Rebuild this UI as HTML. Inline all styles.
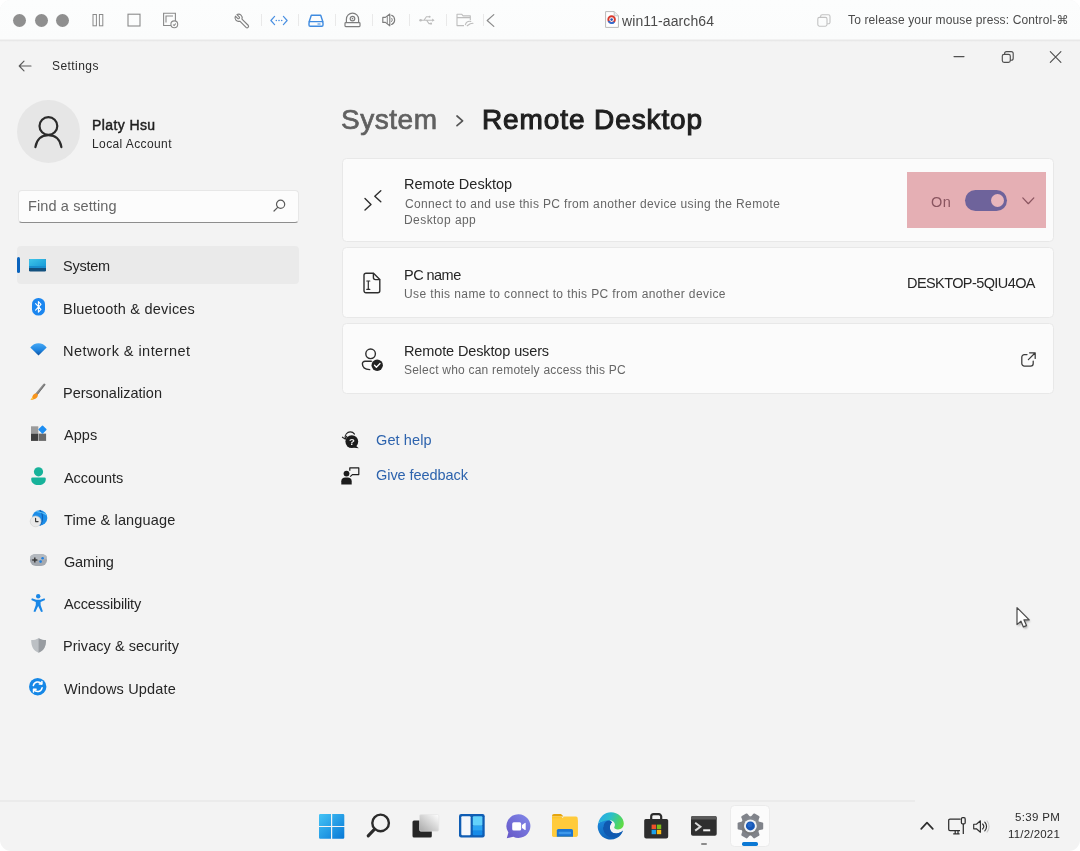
<!DOCTYPE html>
<html lang="en">
<head>
<meta charset="utf-8">
<title>win11-aarch64 - Settings - Remote Desktop</title>
<style>
*{box-sizing:border-box;margin:0;padding:0}
html,body{width:1080px;height:851px;overflow:hidden;background:#fff}
body{font-family:"Liberation Sans","DejaVu Sans",sans-serif;color:#1b1b1b;position:relative}
#win{position:absolute;left:0;top:0;width:1080px;height:851px;background:#f3f3f3;border-radius:11px;overflow:hidden;will-change:transform;filter:blur(.5px)}
.abs{position:absolute}
svg.abs{overflow:visible}
.t{position:absolute;white-space:nowrap;line-height:1}
#macbar{position:absolute;left:0;top:0;width:1080px;height:42px;background:linear-gradient(#fcfdfd 0,#fbfcfc 38.500px,#f1f1f1 39.600px,#e7e7e7 40.600px,#efefef 41.400px,#f3f3f3 42px)}
.dot{position:absolute;top:13.5px;width:13px;height:13px;border-radius:50%;background:#8f8f8f}
.sep{position:absolute;top:14px;width:1px;height:12px;background:#e9e9e9}
#avatar{position:absolute;left:17px;top:100px;width:63px;height:63px;border-radius:50%;background:#e6e6e6}
#search{position:absolute;left:17.500px;top:189.500px;width:281.500px;height:33px;background:#fcfcfc;border:1px solid #e7e7e7;border-bottom:1.5px solid #8d8d8d;border-radius:4px}
#navsel{position:absolute;left:17px;top:246px;width:282px;height:37.500px;background:#eaeaea;border-radius:4px}
#navbar{position:absolute;left:17.3px;top:257px;width:3px;height:15.5px;background:#0a63bd;border-radius:1.5px}
.card{position:absolute;left:342px;width:712px;background:#fbfbfb;border:1px solid #e8e8e8;border-radius:4.5px}
#taskline{position:absolute;left:0;top:800px;width:914.500px;height:2px;background:#ebebeb}
</style>
</head>
<body>
<div id="win">
<!-- ===== macOS VM window toolbar ===== -->
<div id="macbar">
  <div class="dot" style="left:13.2px"></div>
  <div class="dot" style="left:34.5px"></div>
  <div class="dot" style="left:55.7px"></div>
  <!-- pause -->
  <svg class="abs" style="left:92px;top:13px" width="12" height="14" viewBox="0 0 12 14"><g fill="none" stroke="#8a8a8a" stroke-width="1"><rect x="1" y="1.5" width="3.4" height="11.3"/><rect x="7.4" y="1.5" width="3.4" height="11.3"/></g></svg>
  <!-- stop -->
  <svg class="abs" style="left:127px;top:13px" width="14" height="14" viewBox="0 0 14 14"><rect x="1" y="1.2" width="12" height="11.8" fill="none" stroke="#8a8a8a" stroke-width="1.1"/></svg>
  <!-- snapshot -->
  <svg class="abs" style="left:162px;top:12px" width="17" height="17" viewBox="0 0 17 17"><g fill="none" stroke="#8a8a8a" stroke-width="1.1"><path d="M9 13.5H1.6V1.2H13.4V9"/><path d="M4 10.5V4H11"/><circle cx="12.3" cy="12.3" r="3.4"/><path d="M11 12.6l1.2.9 1.6-2"/></g></svg>
  <!-- wrench -->
  <svg class="abs" style="left:233.800px;top:12.600px" width="16" height="15" viewBox="0 0 16 15" preserveAspectRatio="none"><path d="M2.950 1.600A3.600 3.600 0 0 1 7.970 6.050L14.140 12.220A1.500 1.500 0 0 1 12.020 14.340L5.850 8.170A3.600 3.600 0 0 1 1.400 3.150L3.610 5.370A1.100 1.100 0 0 0 5.170 3.810Z" fill="none" stroke="#808080" stroke-width="1.150" stroke-linejoin="round"/></svg>
  <div class="sep" style="left:261px"></div>
  <!-- <..> -->
  <svg class="abs" style="left:270px;top:15px" width="18" height="11" viewBox="0 0 18 11"><g fill="none" stroke="#4a90e2" stroke-width="1.2" stroke-linecap="round" stroke-linejoin="round"><path d="M4.6 1.4L.9 5.5l3.7 4.1M13.4 1.4l3.7 4.1-3.7 4.1"/></g><g fill="#4a90e2"><circle cx="6.3" cy="5.5" r=".8"/><circle cx="9" cy="5.5" r=".8"/><circle cx="11.7" cy="5.5" r=".8"/></g></svg>
  <div class="sep" style="left:298px"></div>
  <!-- drive -->
  <svg class="abs" style="left:307.5px;top:13.5px" width="16" height="13" viewBox="0 0 16 13"><g fill="none" stroke="#3f8be0" stroke-width="1.4" stroke-linejoin="round"><path d="M1 8.2L3.3 1.2h9.4L15 8.2"/><rect x="1" y="7.6" width="14" height="4.6" rx="1.2"/></g><path d="M9.5 10h3" stroke="#3f8be0" stroke-width="1"/></svg>
  <div class="sep" style="left:335px"></div>
  <!-- camera/cd -->
  <svg class="abs" style="left:344px;top:12px" width="17" height="16" viewBox="0 0 17 16"><g fill="none" stroke="#7d7d7d" stroke-width="1.2"><path d="M2.4 10.6V7.2a6.1 6.1 0 0 1 12.2 0v3.4"/><rect x="1" y="10.6" width="15" height="4" rx=".8"/><circle cx="8.5" cy="6.6" r="2.3"/></g><circle cx="8.5" cy="6.6" r=".8" fill="#7d7d7d"/></svg>
  <div class="sep" style="left:371.7px"></div>
  <!-- speaker -->
  <svg class="abs" style="left:381.500px;top:13px" width="15" height="14" viewBox="0 0 15 14"><g fill="none" stroke="#7d7d7d" stroke-width="1.150" stroke-linejoin="round"><path d="M.800 4.400h2.600L7.800 1v11.800L3.400 9.400H.8z"/><path d="M5.300 3.200v7.400" stroke-width=".9"/><path d="M9.600 2.300a5 5 0 0 1 0 9.200" stroke-linecap="round"/><path d="M9.600 5.200a2.200 2.200 0 0 1 0 3.400" stroke-linecap="round" stroke-width="1"/></g></svg>
  <div class="sep" style="left:408.7px"></div>
  <!-- usb -->
  <svg class="abs" style="left:418.5px;top:15px" width="16" height="10" viewBox="0 0 16 10"><g fill="none" stroke="#bdbdbd" stroke-width="1.1" stroke-linecap="round"><path d="M2 5.2h12M5 5.2l2.4-3.4H10M7.6 5.2L10 8.6h1.6"/></g><circle cx="1.6" cy="5.2" r="1.3" fill="#bdbdbd"/><path d="M13.2 3.6l2.4 1.6-2.4 1.6z" fill="#bdbdbd"/><circle cx="10.6" cy="1.8" r="1" fill="#bdbdbd"/><rect x="11.2" y="7.7" width="1.8" height="1.8" fill="#bdbdbd"/></svg>
  <div class="sep" style="left:445.7px"></div>
  <!-- shared folder -->
  <svg class="abs" style="left:455.5px;top:13px" width="18" height="14" viewBox="0 0 18 14"><g fill="none" stroke="#bdbdbd" stroke-width="1.1" stroke-linejoin="round"><path d="M8 12.6H1V1.2h4.6l1.5 1.7h7.2v4.2M1 4.6h13.3"/><path d="M9.4 11.6c.8-2.6 3-3.6 5.4-3.2M11.2 12.8l3-2.1 2.8-.4" stroke-linecap="round"/></g></svg>
  <div class="sep" style="left:482.5px"></div>
  <!-- < -->
  <svg class="abs" style="left:485.5px;top:13.5px" width="9" height="13" viewBox="0 0 9 13"><path d="M7.8.6L1.2 6.5l6.6 5.9" fill="none" stroke="#8a8a8a" stroke-width="1.2" stroke-linecap="round" stroke-linejoin="round"/></svg>
  <!-- doc icon -->
  <svg class="abs" style="left:604.5px;top:11px" width="14" height="17" viewBox="0 0 14 17"><path d="M.6.6h8.6l4.2 4.2v11.6H.6z" fill="#fff" stroke="#b9b9b9" stroke-width="1"/><path d="M9.2.6v4.2h4.2" fill="#ececec" stroke="#b9b9b9" stroke-width=".8"/><circle cx="6.6" cy="8.6" r="3.3" fill="#fff" stroke="#d8382c" stroke-width="1.9"/><path d="M3.6 10a3.3 3.3 0 0 0 5.6.9" fill="none" stroke="#2c6fd6" stroke-width="1.9"/><circle cx="6.6" cy="8.6" r="1.3" fill="#2c56b0"/></svg>
  <!-- copy -->
  <svg class="abs" style="left:816.5px;top:13.5px" width="14" height="13" viewBox="0 0 14 13"><g fill="none" stroke="#c2c2c2" stroke-width="1.1"><rect x=".8" y="3.4" width="9.2" height="8.8" rx="1.6"/><path d="M3.6 3.2V2.4A1.6 1.6 0 0 1 5.2.8h6.2A1.6 1.6 0 0 1 13 2.4v5.8a1.6 1.6 0 0 1-1.6 1.6h-1.2"/></g></svg>
</div>
<!-- ===== Settings window chrome ===== -->
<svg class="abs" style="left:18px;top:60px" width="14" height="12" viewBox="0 0 14 12"><path d="M13 6H1.4M6 1.2L1.2 6 6 10.8" fill="none" stroke="#5a5a5a" stroke-width="1.15" stroke-linecap="round" stroke-linejoin="round"/></svg>
<svg class="abs" style="left:953px;top:50px" width="110" height="14" viewBox="0 0 110 14"><g fill="none" stroke="#505050" stroke-width="1.15" stroke-linecap="round" stroke-linejoin="round"><path d="M1 6.6h10"/><rect x="49.3" y="4.3" width="8" height="8" rx="1.8"/><path d="M51.6 4.2V3.6a2 2 0 0 1 2-2h4.6a2 2 0 0 1 2 2v4.6a2 2 0 0 1-2 2h-.8"/><path d="M97.3 1.6l10.6 10.8M107.9 1.6L97.3 12.4"/></g></svg>

<!-- ===== Sidebar ===== -->
<div id="avatar"></div>
<svg class="abs" style="left:33px;top:114px" width="31" height="35" viewBox="0 0 31 35"><g fill="none" stroke="#2b2b2b" stroke-width="2.2" stroke-linecap="round"><circle cx="15.400" cy="12" r="8.900"/><path d="M2.4 33.2c1.2-8 6.4-12 13-12s11.800 4 13 12"/></g></svg>
<div id="search"></div>
<svg class="abs" style="left:273px;top:199px" width="13" height="13" viewBox="0 0 13 13"><g fill="none" stroke="#5a5a5a" stroke-width="1.2" stroke-linecap="round"><circle cx="7.6" cy="5.2" r="4.1"/><path d="M4.7 8.3L1 12"/></g></svg>
<div id="navsel"></div><div id="navbar"></div>

<!-- nav icons -->
<svg class="abs" style="left:29.3px;top:258.5px" width="17" height="13" viewBox="0 0 17 13"><defs><linearGradient id="gsys" x1="0" y1="0" x2="1" y2="1"><stop offset="0" stop-color="#3fc6ea"/><stop offset="1" stop-color="#1497d6"/></linearGradient></defs><rect x="0" y="0" width="17" height="12.6" rx="1.3" fill="#13517f"/><rect x="0" y="0" width="17" height="9" rx="1.3" fill="url(#gsys)"/><rect x="0" y="7" width="17" height="2" fill="#1a8fcf"/></svg>
<svg class="abs" style="left:31.5px;top:298.3px" width="13" height="18" viewBox="0 0 13 18"><rect x="0" y="0" width="13" height="17.6" rx="6.4" fill="#1b86ef"/><path d="M3.6 5.6l5.400 5.800-2.600 2.800V3.600l2.600 2.800-5.400 5.800" fill="none" stroke="#fff" stroke-width="1.1" stroke-linejoin="round" stroke-linecap="round"/></svg>
<svg class="abs" style="left:29.6px;top:343.3px" width="17" height="13" viewBox="0 0 17 13"><defs><linearGradient id="gwifi" x1="0" y1="0" x2="0" y2="1"><stop offset="0" stop-color="#46a8f4"/><stop offset=".55" stop-color="#1f86e2"/><stop offset="1" stop-color="#0d4f9c"/></linearGradient></defs><path d="M8.500 12.500L.300 4.400C2.400 1.800 5.300.200 8.500.200s6.100 1.600 8.200 4.200z" fill="url(#gwifi)"/></svg>
<svg class="abs" style="left:30px;top:383.500px" width="16" height="17" viewBox="0 0 16 17"><path d="M14.200.700L6.300 10.200" stroke="#8c8c8c" stroke-width="2.300" stroke-linecap="round"/><path d="M14.800.500L7.200 10.800" stroke="#6e6e6e" stroke-width=".9" stroke-linecap="round"/><path d="M7.800 10.600c.5 2.400-1.700 5.200-7.300 5.400 1.800-1.600 1.600-3.200 2.600-5 1-1.700 3.700-2.200 4.700-.4z" fill="#f7941d"/><path d="M3.300 14.600c-1 .8-1.800 1.100-2.800 1.400 1.100-1 1.500-2 1.800-3z" fill="#ffd23e"/></svg>
<svg class="abs" style="left:30.600px;top:425.300px" width="16" height="16" viewBox="0 0 16 16"><rect x="0" y="1.300" width="7.300" height="7.300" fill="#9b9b9b"/><rect x="0" y="8.600" width="7.300" height="7.300" fill="#3f3f3f"/><rect x="7.800" y="8.600" width="7.300" height="7.300" fill="#6a6a6a"/><rect x="8.400" y="1.500" width="6.200" height="6.200" rx=".7" fill="#1b8df2" transform="rotate(45 11.500 4.600)"/></svg>
<svg class="abs" style="left:30.600px;top:466.600px" width="15" height="19" viewBox="0 0 15 19"><circle cx="7.500" cy="4.800" r="4.600" fill="#17b29a"/><path d="M.200 11.800a1.400 1.400 0 0 1 1.400-1.400h11.800a1.400 1.400 0 0 1 1.400 1.400c0 1.600-.3 2.700-1 3.700-1.200 1.700-3.400 2.600-6.300 2.600s-5.100-.9-6.300-2.600c-.7-1-1-2.100-1-3.700z" fill="#17b29a"/></svg>
<svg class="abs" style="left:29.800px;top:509.500px" width="18" height="18" viewBox="0 0 18 18"><circle cx="9.700" cy="7.900" r="7.600" fill="#1c8de8"/><path d="M9.700.300c3.600 2.400 3.900 11.300 0 15.200" fill="none" stroke="#0f62b8" stroke-width="1.200"/><path d="M6.200 1.300c3 1.200 8 1.200 10.300 3.800" fill="none" stroke="#5cc1f7" stroke-width="1.100"/><circle cx="5.600" cy="11.400" r="5.400" fill="#e9e9e9" stroke="#cfcfcf" stroke-width=".6"/><path d="M5.600 8.300v3.300h2.500" fill="none" stroke="#333" stroke-width="1.100" stroke-linecap="round" stroke-linejoin="round"/></svg>
<svg class="abs" style="left:29.600px;top:553.800px" width="17" height="12" viewBox="0 0 17 12"><rect x="0" y="0" width="17" height="12" rx="5.800" fill="#a3a8af"/><rect x="0" y="0" width="17" height="6" rx="5.800" fill="#b4b9bf"/><path d="M4.800 3.400v5.200M2.200 6h5.200" stroke="#3b3b3b" stroke-width="1.500"/><circle cx="12.600" cy="4.300" r="1.300" fill="#1f7fe0"/><circle cx="10.600" cy="7.600" r="1.300" fill="#1f7fe0"/></svg>
<svg class="abs" style="left:31px;top:593.500px" width="15" height="19" viewBox="0 0 15 19"><circle cx="7.200" cy="2.300" r="2.200" fill="#1a87e6"/><path d="M.900 4.300l4.300 1.500h4l4.300-1.500.6 1.700-4.500 1.900v3.200l2.300 6.300-1.800.7-2.900-6.200-2.900 6.200-1.800-.7 2.300-6.300V7.900L.300 6z" fill="#1a87e6"/></svg>
<svg class="abs" style="left:30.500px;top:637.600px" width="16" height="15" viewBox="0 0 16 15"><path d="M7.600.200c2.300 1.400 4.600 1.800 7.400 1.800 0 6.600-2 10.400-7.400 12.800C2.200 12.400.200 8.600.200 2 3 2 5.300 1.600 7.600.200z" fill="#bcc0c4"/><path d="M7.600.200c2.300 1.400 4.600 1.800 7.400 1.800 0 6.600-2 10.400-7.400 12.800z" fill="#989ca1"/></svg>
<svg class="abs" style="left:29.300px;top:678.400px" width="18" height="18" viewBox="0 0 18 18"><circle cx="8.700" cy="8.700" r="8.700" fill="#1587e6"/><g fill="none" stroke="#fff" stroke-width="1.500" stroke-linecap="round" stroke-linejoin="round"><path d="M4.300 7.600a4.600 4.600 0 0 1 8.300-1.700M13.100 9.800a4.600 4.600 0 0 1-8.300 1.700"/><path d="M12.900 3.500v2.600h-2.600M4.500 13.900v-2.600h2.600"/></g></svg>
<!-- ===== Main: breadcrumb chevron + cards ===== -->
<svg class="abs" style="left:455.500px;top:114.500px" width="8" height="12" viewBox="0 0 8 12"><path d="M1 1l5.600 4.800L1 10.600" fill="none" stroke="#555" stroke-width="1.700" stroke-linecap="round" stroke-linejoin="round"/></svg>

<div class="card" style="top:158px;height:84px"></div>
<div class="card" style="top:246.500px;height:71px"></div>
<div class="card" style="top:322.500px;height:71px"></div>

<!-- remote desktop icon >< -->
<svg class="abs" style="left:364px;top:190px" width="18" height="21" viewBox="0 0 18 21"><g fill="none" stroke="#2e2e2e" stroke-width="1.400" stroke-linecap="round" stroke-linejoin="round"><path d="M1 8.600l6 5.800-6 5.600"/><path d="M16.800.800l-6 5.400 6 5.600"/></g></svg>
<!-- pc name icon -->
<svg class="abs" style="left:363.300px;top:271.800px" width="18" height="22" viewBox="0 0 18 22"><g fill="none" stroke="#2e2e2e" stroke-width="1.400" stroke-linejoin="round" stroke-linecap="round"><path d="M1 3.200a2 2 0 0 1 2-2h7.500l6.300 6.300v11.300a2 2 0 0 1-2 2H3a2 2 0 0 1-2-2z"/><path d="M10.400 1.400v4.200a2 2 0 0 0 2 2h4.200"/><path d="M5.300 9v8.400M3.800 9h3M3.800 17.400h3" stroke-width="1.200"/></g></svg>
<!-- users icon -->
<svg class="abs" style="left:360.700px;top:347.500px" width="22" height="24" viewBox="0 0 22 24"><g fill="none" stroke="#2e2e2e" stroke-width="1.400" stroke-linecap="round"><circle cx="9.600" cy="5.800" r="4.800"/><path d="M10.300 13.200H4a2.600 2.600 0 0 0-2.600 2.600c0 3.300 2.700 5.600 7.300 5.800"/></g><circle cx="16.200" cy="17.200" r="5.700" fill="#222"/><path d="M13.500 17.300l1.900 1.900 3.600-3.700" fill="none" stroke="#fff" stroke-width="1.300" stroke-linecap="round" stroke-linejoin="round"/></svg>

<!-- highlight + toggle -->
<div class="abs" style="left:907.200px;top:171.700px;width:139px;height:56px;background:#e5afb4"></div>
<div class="abs" style="left:964.600px;top:189.600px;width:42.800px;height:21.400px;border-radius:10.700px;background:#6e639b"></div>
<div class="abs" style="left:991px;top:193.800px;width:13.400px;height:13.400px;border-radius:50%;background:#e8b6bc"></div>
<svg class="abs" style="left:1022px;top:197px" width="13" height="8" viewBox="0 0 13 8"><path d="M.800.900l5.500 5.800L11.800.9" fill="none" stroke="#8a5560" stroke-width="1.250" stroke-linecap="round" stroke-linejoin="round"/></svg>
<!-- external link -->
<svg class="abs" style="left:1021px;top:351.600px" width="15" height="15" viewBox="0 0 15 15"><g fill="none" stroke="#3a3a3a" stroke-width="1.250" stroke-linecap="round" stroke-linejoin="round"><path d="M6 2.600H3.400A2.600 2.600 0 0 0 .800 5.200v6.200A2.600 2.600 0 0 0 3.400 14h6.200a2.600 2.600 0 0 0 2.600-2.600V9"/><path d="M8.600.800h5.600v5.600M14 1L7.400 7.600"/></g></svg>

<!-- get help icon -->
<svg class="abs" style="left:341px;top:431px" width="19" height="19" viewBox="0 0 19 19"><path d="M4.200 7.600C3.400 3.600 6.400.900 9.200.900c2 0 3.400.9 4.300 2.200" fill="none" stroke="#222" stroke-width="1.100" stroke-linecap="round"/><path d="M1.400 6.200l2.800 1.900 1.500-2.900" fill="none" stroke="#222" stroke-width="1.100" stroke-linecap="round" stroke-linejoin="round"/><circle cx="10.800" cy="10.600" r="6.400" fill="#1c1c1c"/><path d="M14.500 14.500l3.300 2.800-4.800-.6z" fill="#1c1c1c"/><text x="10.800" y="14" font-size="9.500" font-weight="bold" fill="#f3f3f3" text-anchor="middle" font-family="Liberation Sans,sans-serif">?</text></svg>
<!-- feedback icon -->
<svg class="abs" style="left:341px;top:466.500px" width="19" height="18" viewBox="0 0 19 18"><circle cx="5.500" cy="6.600" r="2.900" fill="#1c1c1c"/><path d="M.300 17.400v-3.200c0-2.200 1.700-3.600 3.800-3.600h2.800c2.100 0 3.800 1.400 3.800 3.600v3.200z" fill="#1c1c1c"/><path d="M8.800 3.800V.800h9v6.800h-6.400l-2.200 2" fill="none" stroke="#1c1c1c" stroke-width="1.200" stroke-linejoin="round"/></svg>
<!-- ===== Taskbar ===== -->
<div id="taskline"></div>
<!-- start -->
<svg class="abs" style="left:319px;top:813.500px" width="26" height="25" viewBox="0 0 26 25"><defs><linearGradient id="gst" x1="0" y1="0" x2="1" y2="1"><stop offset="0" stop-color="#45c4f6"/><stop offset="1" stop-color="#0778d6"/></linearGradient></defs><path d="M0 1.200A1.200 1.200 0 0 1 1.200 0H12v11.900H0zM13.200 0h10.900a1.200 1.200 0 0 1 1.200 1.200v10.700H13.200zM0 13.100h12v11.700H1.200A1.200 1.200 0 0 1 0 23.600zM13.200 13.100h12.100v10.500a1.200 1.200 0 0 1-1.200 1.200H13.200z" fill="url(#gst)"/></svg>
<!-- search -->
<svg class="abs" style="left:366px;top:813px" width="26" height="26" viewBox="0 0 26 26"><g fill="none" stroke="#2b2b2b" stroke-linecap="round"><circle cx="14.600" cy="9.900" r="8.300" stroke-width="2.400"/><path d="M8.600 16.200L2.200 22.800" stroke-width="3.100"/></g></svg>
<!-- task view -->
<svg class="abs" style="left:411.500px;top:813.500px" width="28" height="25" viewBox="0 0 28 25"><defs><linearGradient id="gtv" x1="0" y1="1" x2="1" y2="0"><stop offset="0" stop-color="#a9a9a9"/><stop offset="1" stop-color="#ffffff"/></linearGradient></defs><rect x=".5" y="6.500" width="19.300" height="17" rx="1.500" fill="#262626"/><rect x="7.500" y=".500" width="19.300" height="16.800" rx="1.500" fill="url(#gtv)" stroke="#e4e4e4" stroke-width=".6"/></svg>
<!-- widgets -->
<svg class="abs" style="left:458.500px;top:813.500px" width="26" height="24" viewBox="0 0 26 24"><rect x="0" y="0" width="25.700" height="23.500" rx="2.200" fill="#0f5db4"/><rect x="2.300" y="2.300" width="9.300" height="18.900" rx="1" fill="#f4f7fb"/><rect x="13.800" y="2.300" width="9.600" height="9.500" rx="1" fill="#63d2fb"/><rect x="13.800" y="11.800" width="9.600" height="5" fill="#2ba5f3"/><rect x="13.800" y="16.800" width="9.600" height="4.400" rx="1" fill="#168be8"/></svg>
<!-- chat -->
<svg class="abs" style="left:505.500px;top:813.500px" width="25" height="25" viewBox="0 0 25 25"><defs><linearGradient id="gch" x1="0" y1="1" x2="1" y2="0"><stop offset="0" stop-color="#6556c6"/><stop offset="1" stop-color="#8289ea"/></linearGradient></defs><path d="M12.600.200a11.900 11.900 0 1 1-5.300 22.600L.800 24.200l1.600-5.600A11.900 11.900 0 0 1 12.600.2z" fill="url(#gch)"/><rect x="6.200" y="8.300" width="9" height="8.200" rx="1.600" fill="#fff"/><path d="M16 10.900l2.800-2a.6.600 0 0 1 .9.500v6a.6.600 0 0 1-.9.500l-2.800-2z" fill="#fff"/></svg>
<!-- explorer -->
<svg class="abs" style="left:551.500px;top:814px" width="26" height="23" viewBox="0 0 26 23"><path d="M0 2a2 2 0 0 1 2-2h7l2.600 2.600H0z" fill="#e5a50e"/><path d="M0 2.600h9.200L11.600 5H24a1.700 1.700 0 0 1 1.700 1.700V21a1.700 1.700 0 0 1-1.700 1.700H1.700A1.700 1.700 0 0 1 0 21z" fill="#ffc62b"/><path d="M0 4.600h10l2-2h12a1.700 1.700 0 0 1 1.700 1.700V21a1.700 1.700 0 0 1-1.700 1.700H1.700A1.700 1.700 0 0 1 0 21z" fill="#ffcb3c"/><path d="M4.800 16.600a1.600 1.600 0 0 1 1.600-1.600h13a1.600 1.600 0 0 1 1.600 1.600v6.100H4.800z" fill="#1a74d2"/><rect x="6.700" y="17.800" width="12.400" height="2.400" rx=".8" fill="#3d98ea"/></svg>
<!-- edge -->
<svg class="abs" style="left:597.900px;top:812.400px" width="26" height="26" viewBox="0 0 26 26"><defs><linearGradient id="ge1" x1="0" y1=".2" x2="1" y2=".55"><stop offset="0" stop-color="#27a8ea"/><stop offset=".45" stop-color="#2bbfc9"/><stop offset=".8" stop-color="#48d272"/><stop offset="1" stop-color="#5fdb46"/></linearGradient><linearGradient id="ge2" x1="0" y1="0" x2=".3" y2="1"><stop offset="0" stop-color="#1e8fe2"/><stop offset="1" stop-color="#0f62b8"/></linearGradient></defs><path d="M.300 11A12.800 12.800 0 0 0 25 18.400C22.600 20.600 20.200 21.400 18.200 21.400 14 21.400 11.900 18.400 11.900 15.400 11.900 13.200 12.800 11.600 14 10.600L10 6z" fill="url(#ge2)"/><path d="M5.600 15.200C5.600 10.800 8.400 8.600 11 8.600 12.400 8.600 13.400 9.600 14 10.600 12.800 11.600 11.900 13.200 11.900 15.400 11.900 18.400 14 21.400 18.200 21.400 20.200 21.400 22.600 20.600 25 18.400 23 22.800 18.600 25.700 14 25.600 9 25 5 20.400 5 15.200z" fill="#1059b0"/><path d="M.300 11C1.600 4.800 6.800.200 13 .200 20 .200 25.800 5.600 25.800 11.600 25.800 15.200 23.400 17.500 20 17.500 17.600 17.500 16.200 16.600 16.200 15.600 16.200 14.800 16.900 14.200 16.900 12.800 16.900 10.200 14.400 8.300 11.200 8.300 6.400 8.300 2 10.600.300 11z" fill="url(#ge1)"/></svg>
<!-- store -->
<svg class="abs" style="left:644px;top:813px" width="25" height="26" viewBox="0 0 25 26"><path d="M7.200 6.500V3.600a2.400 2.400 0 0 1 2.400-2.400h5.200a2.400 2.400 0 0 1 2.400 2.400v2.900" fill="none" stroke="#2b2b2b" stroke-width="2.200"/><path d="M.200 7.600A1.600 1.600 0 0 1 1.800 6h20.800a1.600 1.600 0 0 1 1.600 1.600v15.800a2 2 0 0 1-2 2H2.200a2 2 0 0 1-2-2z" fill="#2d2d2d"/><rect x="7.600" y="11.600" width="4.400" height="4.400" fill="#f0502a"/><rect x="12.800" y="11.600" width="4.400" height="4.400" fill="#7dbb1b"/><rect x="7.600" y="16.800" width="4.400" height="4.400" fill="#1ba1ea"/><rect x="12.800" y="16.800" width="4.400" height="4.400" fill="#fbba13"/></svg>
<!-- terminal -->
<svg class="abs" style="left:690.500px;top:815.500px" width="26" height="20" viewBox="0 0 26 20"><rect x="0" y="0" width="25.700" height="19.800" rx="1.800" fill="#2f2f2f"/><path d="M0 1.800A1.800 1.800 0 0 1 1.800 0h22.100a1.800 1.800 0 0 1 1.800 1.800V3.400H0z" fill="#5a5a5a"/><path d="M4.200 6.800l5.200 3.900-5.200 3.900" fill="none" stroke="#d9d9d9" stroke-width="2"/><path d="M12.200 14.300h7" stroke="#f2f2f2" stroke-width="2"/></svg>
<div class="abs" style="left:700.500px;top:842.800px;width:6px;height:2.400px;border-radius:1.200px;background:#8b8b8b"></div>
<!-- settings (active) -->
<div class="abs" style="left:729.700px;top:805.300px;width:40.600px;height:41.400px;border-radius:4.500px;background:#fbfbfb;border:1px solid #ebebeb"></div>
<svg class="abs" style="left:736.500px;top:812.500px" width="27" height="26" viewBox="0 0 27 26"><defs><linearGradient id="ggr" x1="0" y1="0" x2="0" y2="1"><stop offset="0" stop-color="#878c94"/><stop offset="1" stop-color="#777"/></linearGradient></defs><g transform="translate(13.400 12.900)"><g fill="url(#ggr)" transform="rotate(30)"><circle r="9.600"/></g><g fill="#80838a"><path id="tooth" d="M-4.300-8.200L-3.500-12a1.100 1.100 0 0 1 1-.800h5a1.100 1.100 0 0 1 1 .800L4.300-8.200z" transform="rotate(30)"/><use href="#tooth" transform="rotate(60)"/><use href="#tooth" transform="rotate(120)"/><use href="#tooth" transform="rotate(180)"/><use href="#tooth" transform="rotate(240)"/><use href="#tooth" transform="rotate(300)"/></g><circle r="6.400" fill="#f1f3f6"/><circle r="4.500" fill="#1758b8"/><circle cx="-.5" cy="-1" r="2.400" fill="#2668c6"/></g></svg>
<div class="abs" style="left:741.600px;top:842.300px;width:16.600px;height:3.500px;border-radius:1.700px;background:#0b78d4"></div>

<!-- tray -->
<svg class="abs" style="left:920px;top:821px" width="14" height="9" viewBox="0 0 14 9"><path d="M1.200 7.800L7 1.600l5.800 6.200" fill="none" stroke="#2e2e2e" stroke-width="1.700" stroke-linecap="round" stroke-linejoin="round"/></svg>
<svg class="abs" style="left:947.500px;top:816.500px" width="19" height="18" viewBox="0 0 19 18"><g fill="none" stroke="#2e2e2e" stroke-width="1.250" stroke-linejoin="round"><path d="M12 13.600H2A1.300 1.300 0 0 1 .7 12.300V3.400A1.300 1.300 0 0 1 2 2.100h10.600"/><path d="M5.200 16.900h6.400M7.200 13.800v3M10 13.800v3"/><rect x="13.400" y=".7" width="3.800" height="6.200" rx="1.200"/><path d="M15.300 7v9.900"/></g></svg>
<svg class="abs" style="left:973px;top:819.500px" width="17" height="13" viewBox="0 0 17 13"><g fill="none" stroke="#2e2e2e" stroke-width="1.150" stroke-linejoin="round" stroke-linecap="round"><path d="M.7 4.200h2.700L7.400.8v11.400L3.400 8.800H.7z"/><path d="M9.600 4a3.600 3.600 0 0 1 0 5M11.800 2.200a6.200 6.200 0 0 1 0 8.600"/></g><path d="M14 .8a8.800 8.800 0 0 1 0 11.400" fill="none" stroke="#c9c9c9" stroke-width="1.100" stroke-linecap="round"/></svg>

<!-- mouse cursor -->
<svg class="abs" style="left:1014px;top:605px" width="20" height="26" viewBox="0 0 20 26"><defs><filter id="cs" x="-30%" y="-30%" width="180%" height="180%"><feGaussianBlur stdDeviation=".9"/></filter></defs><path d="M4.200 4.400v17l3.900-3.500 2.500 5.800 3.100-1.300-2.500-5.700h5.200z" fill="#000" opacity=".35" filter="url(#cs)"/><path d="M3 2.600v17l3.900-3.500 2.500 5.800 3.100-1.300L10 14.900h5.200z" fill="#fff" stroke="#4a4a4a" stroke-width="1.200" stroke-linejoin="round"/></svg>

<!-- ===== Text ===== -->
<div class="t" id="mac_title" style="left:622.00px;top:14.00px;font-size:14px;letter-spacing:0.104px;color:#4b4b4b">win11-aarch64</div>
<div class="t" id="mac_rel" style="left:848.00px;top:14.00px;font-size:12px;letter-spacing:0.135px;color:#4b4b4b">To release your mouse press: Control-⌘</div>
<div class="t" id="settings" style="left:52.00px;top:60.00px;font-size:12px;letter-spacing:0.436px;color:#2a2a2a">Settings</div>
<div class="t" id="uname" style="left:92.00px;top:118.00px;font-size:14px;letter-spacing:0.406px;color:#1f1f1f;-webkit-text-stroke:.45px #1f1f1f">Platy Hsu</div>
<div class="t" id="uacct" style="left:92.00px;top:138.00px;font-size:12px;letter-spacing:0.396px;color:#2a2a2a">Local Account</div>
<div class="t" id="find" style="left:28.00px;top:199.00px;font-size:14.5px;letter-spacing:0.115px;color:#666">Find a setting</div>
<div class="t" id="n0" style="left:63.00px;top:259.00px;font-size:14.5px;letter-spacing:-0.240px;color:#262626">System</div>
<div class="t" id="n1" style="left:63.00px;top:302.00px;font-size:14.5px;letter-spacing:0.206px;color:#262626">Bluetooth &amp; devices</div>
<div class="t" id="n2" style="left:63.00px;top:344.00px;font-size:14.5px;letter-spacing:0.453px;color:#262626">Network &amp; internet</div>
<div class="t" id="n3" style="left:63.00px;top:386.00px;font-size:14.5px;letter-spacing:-0.014px;color:#262626">Personalization</div>
<div class="t" id="n4" style="left:64.00px;top:428.00px;font-size:14.5px;letter-spacing:0.033px;color:#262626">Apps</div>
<div class="t" id="n5" style="left:64.00px;top:471.00px;font-size:14.5px;letter-spacing:-0.057px;color:#262626">Accounts</div>
<div class="t" id="n6" style="left:64.00px;top:513.00px;font-size:14.5px;letter-spacing:0.157px;color:#262626">Time &amp; language</div>
<div class="t" id="n7" style="left:64.00px;top:555.00px;font-size:14.5px;letter-spacing:-0.180px;color:#262626">Gaming</div>
<div class="t" id="n8" style="left:64.00px;top:597.00px;font-size:14.5px;letter-spacing:-0.142px;color:#262626">Accessibility</div>
<div class="t" id="n9" style="left:63.00px;top:639.00px;font-size:14.5px;letter-spacing:0.041px;color:#262626">Privacy &amp; security</div>
<div class="t" id="n10" style="left:64.00px;top:682.00px;font-size:14.5px;letter-spacing:0.169px;color:#262626">Windows Update</div>
<div class="t" id="h_sys" style="left:341.00px;top:106.00px;font-size:28px;letter-spacing:0.540px;color:#606060;-webkit-text-stroke:.7px #606060">System</div>
<div class="t" id="h_rd" style="left:482.00px;top:106.00px;font-size:28px;letter-spacing:0.892px;color:#1f1f1f;-webkit-text-stroke:1.1px #1f1f1f">Remote Desktop</div>
<div class="t" id="c1t" style="left:404.00px;top:177.00px;font-size:14.5px;letter-spacing:0.008px;color:#262626">Remote Desktop</div>
<div class="t" id="c1s1" style="left:405.00px;top:198.00px;font-size:12px;letter-spacing:0.355px;color:#666">Connect to and use this PC from another device using the Remote</div>
<div class="t" id="c1s2" style="left:404.00px;top:214.00px;font-size:12px;letter-spacing:0.440px;color:#666">Desktop app</div>
<div class="t" id="c2t" style="left:404.00px;top:268.00px;font-size:14.5px;letter-spacing:-0.542px;color:#262626">PC name</div>
<div class="t" id="c2s" style="left:404.00px;top:288.00px;font-size:12px;letter-spacing:0.396px;color:#666">Use this name to connect to this PC from another device</div>
<div class="t" id="c2v" style="left:907.00px;top:276.00px;font-size:14.5px;letter-spacing:-0.586px;color:#262626">DESKTOP-5QIU4OA</div>
<div class="t" id="c3t" style="left:404.00px;top:344.00px;font-size:14.5px;letter-spacing:-0.126px;color:#262626">Remote Desktop users</div>
<div class="t" id="c3s" style="left:404.00px;top:364.00px;font-size:12px;letter-spacing:0.222px;color:#666">Select who can remotely access this PC</div>
<div class="t" id="on" style="left:931.00px;top:195.00px;font-size:14.5px;letter-spacing:0.400px;color:#8a5560">On</div>
<div class="t" id="l1" style="left:376.00px;top:433.00px;font-size:14.5px;letter-spacing:0.114px;color:#2d63ad">Get help</div>
<div class="t" id="l2" style="left:376.00px;top:468.00px;font-size:14.5px;letter-spacing:-0.058px;color:#2d63ad">Give feedback</div>
<div class="t" id="time" style="left:1015.00px;top:812.00px;font-size:11.5px;letter-spacing:0.350px;color:#2a2a2a">5:39 PM</div>
<div class="t" id="date" style="left:1008.00px;top:829.00px;font-size:11.5px;letter-spacing:0.188px;color:#2a2a2a">11/2/2021</div>

</div>
</body>
</html>
